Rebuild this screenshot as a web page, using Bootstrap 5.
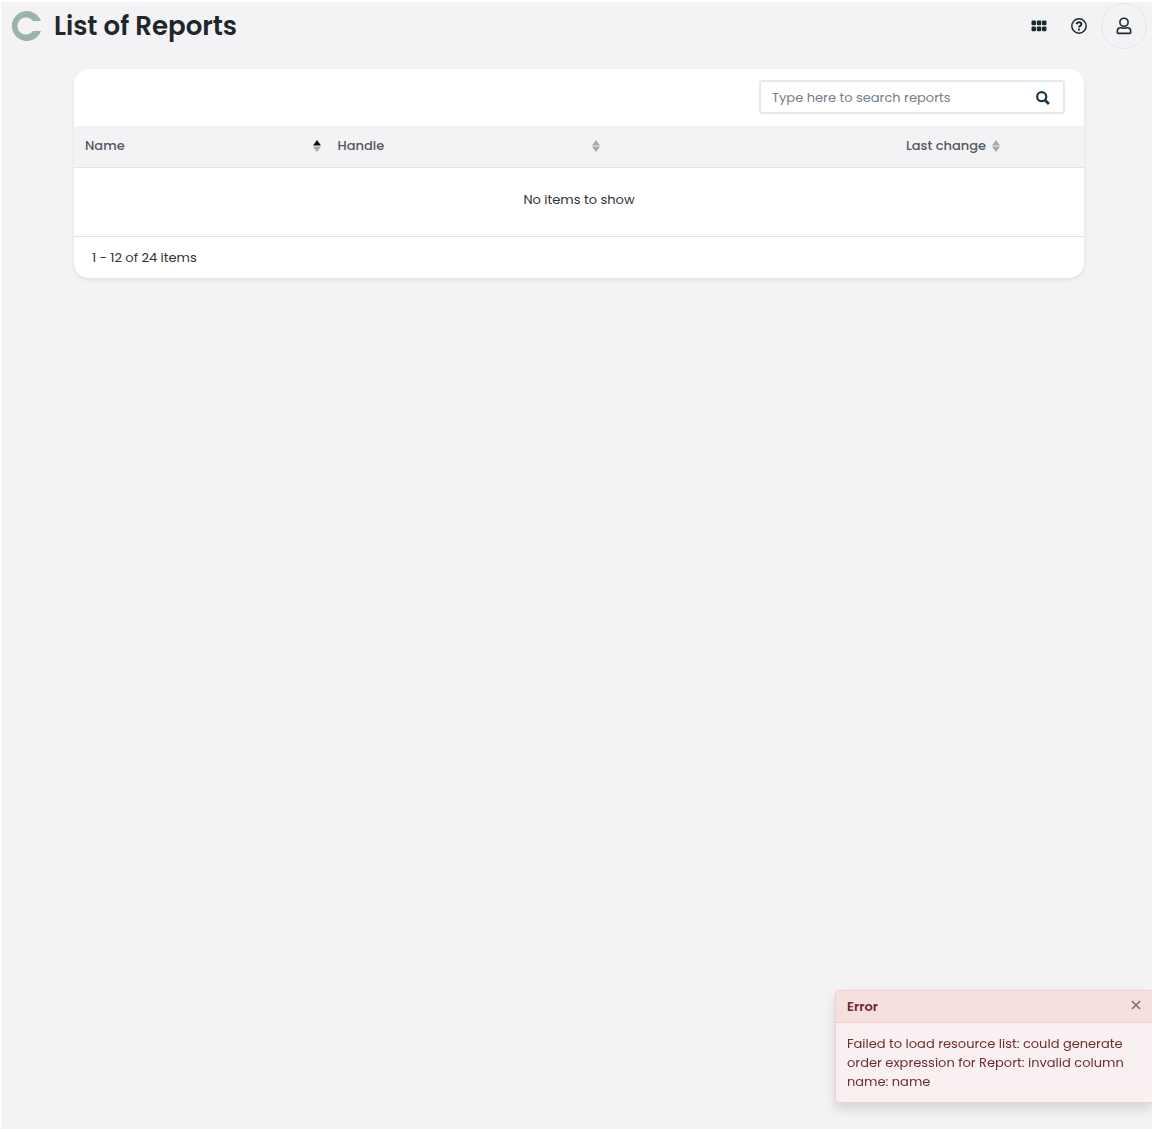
<!DOCTYPE html>
<html lang="en">
<head>
<meta charset="utf-8">
<meta name="viewport" content="width=device-width, initial-scale=1">
<title>List of Reports</title>
<link href="https://cdn.jsdelivr.net/npm/bootstrap@5.3.0/dist/css/bootstrap.min.css" rel="stylesheet">
<style>
  body { font-family: Poppins, Inter, sans-serif; font-size: 13px; line-height: 20px; color: #2d3238; background: #fff; padding: 2px 0 3px 1px; }
  .app-shell { background: #f3f3f5; }
  .topbar { height: 47px; padding: 0 5px 0 10px; }
  .brand-title { font-size: 26px; line-height: 32px; font-weight: 600; color: #20262b; }
  .tool-btn { width: 40px; height: 40px; color: #1c2b2b; }
  .profile-btn { width: 46px; height: 46px; margin-left: 2px; border: 1px solid #e6e6ec; color: #1c2b2b; }
  .page-body { padding: 20px 68px 24px 73px; }
  .report-panel { border-radius: 15px; box-shadow: 0 2px 4px rgba(0,0,0,.08); }
  .panel-top { padding: 11px 19px 12px; }
  .search-box { width: 306px; border: 2px solid #e4e9ef; border-radius: 3px; }
  .search-box .form-control { height: 30px; padding: 1px 11px 0; font-size: 13px; background: transparent; box-shadow: none; }
  .search-box .form-control::placeholder { color: #757d86; opacity: 1; }
  .search-box .btn { padding: 2px 13px 0 8px; color: #17374f; }
  .report-table { table-layout: fixed; color: #2d3238; }
  .report-table th { height: 41px; padding: 0 6px 0 11px; background: #f3f3f5; color: #54595f; border-bottom: 1px solid #e2e3e7; vertical-align: middle; }
  .report-table td { height: 69px; padding: 0 11px 3px; border-bottom: 1px solid #e2e3e7; text-align: center; vertical-align: middle; }
  .col-name { width: 25%; }
  .col-handle { width: 279px; }
  .col-action { width: 78px; }
  .sort-btn, .sort-btn:hover { font-size: 13px; font-weight: 500; line-height: 20px; color: #54595f; }
  .sort-btn { gap: 6px; }
  .panel-foot { padding: 11px 18px 10px; }
  .error-toast { width: 317px; border: 1px solid #f3cfd1; border-right: 0; border-radius: 3px 0 0 3px; background: #f9f0f1; color: #712b2d; box-shadow: 0 6px 12px rgba(0,0,0,.13); --bs-toast-max-width: 100%; }
  .toast-wrap { bottom: 29px; right: 0; }
  .error-toast .toast-header { height: 32px; padding: 0 11px; background: #f5dfdf; color: #712b2d; border-bottom: 1px solid #f3cfd1; border-radius: 3px 0 0 0; font-size: 13px; font-weight: 600; }
  .error-toast .toast-body { padding: 11px; font-size: 13px; line-height: 19px; }
  .close-btn, .close-btn:hover { color: #806a6b; height: 28px; }
</style>
<script src="https://cdn.jsdelivr.net/npm/bootstrap@5.3.0/dist/js/bootstrap.bundle.min.js"></script>
</head>
<body class="d-flex flex-column min-vh-100">
<svg class="d-none" aria-hidden="true">
  <symbol id="sort-icon" viewBox="0 0 8 12"><path d="M4 0 8 5.6H0z"/><path d="M4 12 0 6.400h8z" fill="#a9a9aa"/></symbol>
</svg>
<div class="app-shell flex-grow-1">
  <header class="topbar d-flex align-items-center">
    <svg width="31" height="32" viewBox="0 0 31 32" aria-hidden="true"><path d="M30 11A15 15 0 1 0 30 21H22A8.600 8.600 0 1 1 22 11z" fill="#9ab3ad"/></svg>
    <h1 class="brand-title mb-0 ms-2 ps-1">List of Reports</h1>
    <nav class="ms-auto d-flex align-items-center" aria-label="Tools">
      <button class="btn border-0 p-0 tool-btn d-flex align-items-center justify-content-center" type="button" aria-label="Applications">
        <svg width="16" height="12" viewBox="0 0 16 12" fill="currentColor"><rect x=".5" y=".5" width="4.500" height="4.700" rx="1.200"/><rect x="5.800" y=".5" width="4.500" height="4.700" rx="1.200"/><rect x="11" y=".5" width="4.500" height="4.700" rx="1.200"/><rect x=".5" y="6.500" width="4.500" height="4.700" rx="1.200"/><rect x="5.800" y="6.500" width="4.500" height="4.700" rx="1.200"/><rect x="11" y="6.500" width="4.500" height="4.700" rx="1.200"/></svg>
      </button>
      <button class="btn border-0 p-0 tool-btn d-flex align-items-center justify-content-center" type="button" aria-label="Help">
        <svg width="16" height="16" viewBox="0 0 16 16" fill="none" stroke="currentColor"><circle cx="8" cy="8" r="7.200" stroke-width="1.500"/><path d="M5.600 6.300C5.900 4.900 6.800 4.300 8 4.300c1.300 0 2.400.7 2.400 2C10.400 7.900 8 7.800 8 9.500" stroke-width="1.900"/><circle cx="8" cy="11.600" r="1.100" fill="currentColor" stroke="none"/></svg>
      </button>
      <button class="btn p-0 profile-btn rounded-circle d-flex align-items-center justify-content-center" type="button" aria-label="Profile">
        <svg width="16" height="18" viewBox="0 0 16 18" fill="none" stroke="currentColor" stroke-width="1.600"><circle cx="8" cy="5.300" r="4.100"/><path d="M4.600 10.800c1.500 0 1.900.5 3.400.5s1.900-.5 3.400-.5c2 0 3.300 1.600 3.300 3.600v1q0 1-1 1H2.300q-1 0-1-1v-1c0-2 1.300-3.600 3.300-3.600z"/></svg>
      </button>
    </nav>
  </header>
  <main class="page-body">
    <section class="report-panel bg-white overflow-hidden">
      <div class="panel-top d-flex justify-content-end">
        <form class="search-box d-flex" role="search">
          <input class="form-control border-0" type="search" aria-label="Search reports" placeholder="Type here to search reports">
          <button class="btn border-0" type="button" aria-label="Search"><svg class="d-block" width="14" height="14" viewBox="0 0 13 13" fill="none" stroke="currentColor"><circle cx="5.300" cy="5.300" r="4.200" stroke-width="2.100"/><path d="m8.500 8.500 3.500 3.500" stroke-width="2.600"/></svg></button>
        </form>
      </div>
      <table class="table report-table mb-0">
        <colgroup><col class="col-name"><col class="col-handle"><col><col class="col-action"></colgroup>
        <thead>
          <tr>
            <th scope="col"><button type="button" class="sort-btn btn border-0 p-0 w-100 d-flex align-items-center justify-content-between">Name <svg width="8" height="12" fill="#111" aria-hidden="true"><use href="#sort-icon"/></svg></button></th>
            <th scope="col"><button type="button" class="sort-btn btn border-0 p-0 w-100 d-flex align-items-center justify-content-between">Handle <svg width="8" height="12" fill="#a9a9aa" aria-hidden="true"><use href="#sort-icon"/></svg></button></th>
            <th scope="col"><button type="button" class="sort-btn btn border-0 p-0 w-100 d-flex align-items-center justify-content-end">Last change <svg width="8" height="12" fill="#a9a9aa" aria-hidden="true"><use href="#sort-icon"/></svg></button></th>
            <th></th>
          </tr>
        </thead>
        <tbody><tr><td colspan="4">No items to show</td></tr></tbody>
      </table>
      <div class="panel-foot">1 - 12 of 24 items</div>
    </section>
  </main>
</div>
<div class="toast-wrap position-fixed">
  <div class="toast show error-toast" role="alert">
    <div class="toast-header d-flex justify-content-between">
      <span>Error</span>
      <button class="btn border-0 p-0 close-btn d-flex align-items-center align-self-start" type="button" aria-label="Close"><svg width="10" height="10" viewBox="0 0 10 10" stroke="currentColor" stroke-width="1.600"><path d="m1 1 8 8M9 1 1 9"/></svg></button>
    </div>
    <div class="toast-body">Failed to load resource list: could generate order expression for Report: invalid column name: name</div>
  </div>
</div>
</body>
</html>
